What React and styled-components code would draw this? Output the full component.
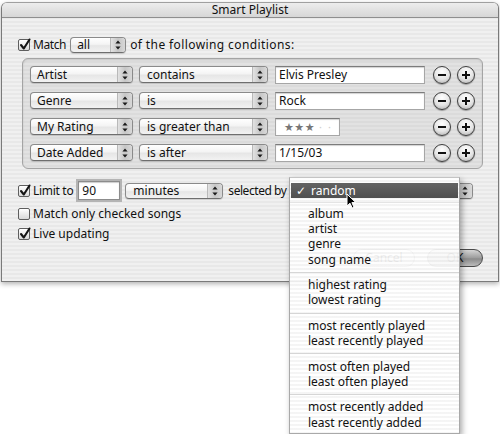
import React from "react";
import styled, { createGlobalStyle } from "styled-components";

const GlobalStyle = createGlobalStyle`
  html, body { margin: 0; padding: 0; background: #fff; }
  body {
    font-family: "Noto Sans", "DejaVu Sans", sans-serif;
    font-size: 12px;
    color: #111;
  }
  * { box-sizing: border-box; }
`;

const Page = styled.div`
  position: relative;
  width: 500px;
  height: 434px;
  overflow: hidden;
  padding: 2px 0 0 1px;
`;

const Window = styled.div`
  width: 498px;
  height: 280px;
  border: 1px solid #7a7a7a;
  border-top-color: #a0a0a0;
  border-radius: 6px 6px 0 0;
  background: repeating-linear-gradient(
    to bottom,
    #f0f0f0 0,
    #f0f0f0 2px,
    #e8e8e8 2px,
    #e8e8e8 4px
  );
  box-shadow: 0 2px 5px rgba(0, 0, 0, 0.3);
  display: flex;
  flex-direction: column;
  overflow: hidden;
`;

const TitleBar = styled.div`
  height: 15px;
  flex-shrink: 0;
  background: linear-gradient(#ededed, #d6d6d6);
  border-bottom: 1px solid #8e8e8e;
  display: flex;
  align-items: center;
  justify-content: center;
  font-size: 12px;
  line-height: 1;
  color: #111;
`;

const Body = styled.div`
  padding: 18px 0 0 16px;
  display: flex;
  flex-direction: column;
`;

const Row = styled.div`
  display: flex;
  align-items: center;
  height: ${(p) => p.$h || 16}px;
  margin-top: ${(p) => p.$mt || 0}px;
`;

const Label = styled.span`
  white-space: nowrap;
  line-height: 1;
  margin-left: ${(p) => p.$ml || 0}px;
  letter-spacing: ${(p) => p.$ls || 0}px;
`;

const BoxCheck = styled.span`
  position: relative;
  width: 12px;
  height: 12px;
  flex-shrink: 0;
  border: 1px solid #5e5e5e;
  border-radius: 2px;
  background: linear-gradient(#ffffff, #d9d9d9);
  box-shadow: inset 0 1px 1px rgba(255, 255, 255, 0.8);
  svg {
    position: absolute;
    left: 0;
    top: -2px;
  }
`;

const Check = ({ on }) => (
  <BoxCheck>
    {on && (
      <svg width="12" height="13" viewBox="0 0 12 13">
        <path d="M2 7 L4.8 10.5 L10.5 1.5" fill="none" stroke="#151515" strokeWidth="2.1" strokeLinecap="round" strokeLinejoin="round" />
      </svg>
    )}
  </BoxCheck>
);

const CheckLabel = styled.label`
  display: flex;
  align-items: center;
  gap: 3px;
`;

const PopupBox = styled.div`
  width: ${(p) => p.$w}px;
  height: ${(p) => p.$h || 17}px;
  flex-shrink: 0;
  display: flex;
  border: 1px solid #8a8a8a;
  border-bottom-color: #6e6e6e;
  border-radius: 4px;
  background: linear-gradient(#ffffff, #f4f4f4 45%, #e6e6e6 55%, #f2f2f2);
  box-shadow: 0 1px 1px rgba(0, 0, 0, 0.15);
  overflow: hidden;
  margin-left: ${(p) => p.$ml || 0}px;
`;

const PopupText = styled.span`
  flex: 1;
  display: flex;
  align-items: center;
  padding-left: ${(p) => p.$pl || 7}px;
  line-height: 1;
  white-space: nowrap;
`;

const PopupArrows = styled.span`
  width: 15px;
  flex-shrink: 0;
  display: flex;
  align-items: center;
  justify-content: center;
  background: linear-gradient(90deg, #e2e2e2, #c6c6c6 50%, #d8d8d8);
  border-left: 1px solid #b9b9b9;
`;

const Arrows = () => (
  <svg width="6" height="10" viewBox="0 0 6 10">
    <path d="M3 0.5 L5.6 3.6 H0.4 Z M0.4 6.4 H5.6 L3 9.5 Z" fill="#1a1a1a" />
  </svg>
);

const Popup = ({ w, h, ml, pl, children }) => (
  <PopupBox $w={w} $h={h} $ml={ml}>
    <PopupText $pl={pl}>{children}</PopupText>
    <PopupArrows>
      <Arrows />
    </PopupArrows>
  </PopupBox>
);

const Field = styled.div`
  width: ${(p) => p.$w}px;
  height: ${(p) => p.$h || 18}px;
  flex-shrink: 0;
  margin-left: ${(p) => p.$ml || 0}px;
  margin-right: ${(p) => p.$mr || 0}px;
  display: flex;
  align-items: center;
  padding-left: 3px;
  background: #fff;
  border: 1px solid #a6a6a6;
  border-top-color: #7c7c7c;
  box-shadow: inset 0 1px 1px rgba(0, 0, 0, 0.18);
  line-height: 1;
  white-space: nowrap;
`;

const FocusField = styled(Field)`
  box-shadow: 0 0 0 2px #b4b4b4, inset 0 1px 1px rgba(0, 0, 0, 0.2);
  border-color: #8c8c8c;
`;

const Stars = styled.span`
  margin-left: 5px;
  color: #777;
  font-size: 11px;
  letter-spacing: 0.5px;
  span {
    color: #cfcfcf;
    letter-spacing: 6px;
    margin-left: 4px;
  }
`;

const ConditionsBox = styled.div`
  margin: 5px 0 0 4px;
  width: 461px;
  padding: 7px 8px 7px 7px;
  border: 1px solid #a4a4a4;
  border-radius: 6px;
  background: repeating-linear-gradient(
    to bottom,
    #e2e2e2 0,
    #e2e2e2 2px,
    #dbdbdb 2px,
    #dbdbdb 4px
  );
  box-shadow: inset 0 1px 2px rgba(0, 0, 0, 0.12);
  display: flex;
  flex-direction: column;
  gap: 9px;
`;

const CondRow = styled.div`
  display: flex;
  align-items: center;
  height: 17px;
`;

const RoundBtn = styled.span`
  width: 18px;
  height: 18px;
  flex-shrink: 0;
  margin-left: ${(p) => p.$ml}px;
  border-radius: 50%;
  border: 1.5px solid #3e3e3e;
  background: radial-gradient(circle at 50% 30%, #ffffff, #e4e4e4 55%, #a8a8a8);
  box-shadow: 0 1px 1px rgba(0, 0, 0, 0.3);
  display: flex;
  align-items: center;
  justify-content: center;
`;

const Glyph = ({ plus }) => (
  <svg width="10" height="10" viewBox="0 0 10 10">
    <path d={plus ? "M1 5 H9 M5 1 V9" : "M1 5 H9"} stroke="#111" strokeWidth="2" />
  </svg>
);

const Footer = styled.div`
  display: flex;
  justify-content: flex-end;
  gap: 12px;
  margin-top: 7px;
  padding-right: 15px;
`;

const PushBtn = styled.div`
  width: ${(p) => p.$w}px;
  height: 18px;
  border-radius: 9px;
  border: 1px solid ${(p) => (p.$def ? "#4a4a4a" : "#7a7a7a")};
  background: ${(p) =>
    p.$def
      ? "linear-gradient(#d4d4d4, #9c9c9c 50%, #8a8a8a 55%, #bcbcbc)"
      : "linear-gradient(#ffffff, #ececec 50%, #dcdcdc 55%, #f0f0f0)"};
  display: flex;
  align-items: center;
  justify-content: center;
  line-height: 1;
`;

const Menu = styled.div`
  position: absolute;
  left: 289px;
  top: 177px;
  width: 171px;
  height: 257px;
  padding-top: 5px;
  background: repeating-linear-gradient(
    to bottom,
    rgba(255, 255, 255, 0.93) 0,
    rgba(255, 255, 255, 0.93) 2px,
    rgba(244, 244, 244, 0.93) 2px,
    rgba(244, 244, 244, 0.93) 4px
  );
  border: 1px solid #a9a9a9;
  border-top-color: #c4c4c4;
  box-shadow: 2px 3px 6px rgba(0, 0, 0, 0.35);
  font-size: 12px;
  color: #111;
  display: flex;
  flex-direction: column;
`;

const Item = styled.div`
  height: ${(p) => (p.$sel ? 15 : 15.3)}px;
  flex-shrink: 0;
  margin: 0 1px;
  padding-left: ${(p) => (p.$sel ? 5 : 17)}px;
  display: flex;
  align-items: center;
  gap: 5px;
  line-height: 1;
  white-space: nowrap;
  background: ${(p) => (p.$sel ? "linear-gradient(#636363, #4f4f4f)" : "transparent")};
  color: ${(p) => (p.$sel ? "#fff" : "#111")};
`;

const Sep = styled.div`
  height: ${(p) => p.$h}px;
  flex-shrink: 0;
  display: flex;
  align-items: center;
  &::after {
    content: "";
    flex: 1;
    height: 1px;
    background: ${(p) => p.$line || "#d6d6d6"};
  }
`;

const Cursor = styled.svg`
  position: absolute;
  left: 346px;
  top: 193px;
`;

const groups = [
  ["album", "artist", "genre", "song name"],
  ["highest rating", "lowest rating"],
  ["most recently played", "least recently played"],
  ["most often played", "least often played"],
  ["most recently added", "least recently added"],
];

const conditions = [
  { field: "Artist", op: "contains", value: "Elvis Presley" },
  { field: "Genre", op: "is", value: "Rock" },
  { field: "My Rating", op: "is greater than", rating: true },
  { field: "Date Added", op: "is after", value: "1/15/03" },
];

export default function App() {
  return (
    <>
      <GlobalStyle />
      <Page>
        <Window>
          <TitleBar>Smart Playlist</TitleBar>
          <Body>
            <Row $h={17}>
              <CheckLabel>
                <Check on />
                <Label $ls={-0.4}>Match</Label>
              </CheckLabel>
              <Popup w={56} h={16} ml={4} pl={6}>all</Popup>
              <Label $ml={4} $ls={0.4}>of the following conditions:</Label>
            </Row>

            <ConditionsBox>
              {conditions.map((c) => (
                <CondRow key={c.field}>
                  <Popup w={103} pl={6}>{c.field}</Popup>
                  <Popup w={129} ml={6}>{c.op}</Popup>
                  {c.rating ? (
                    <Field $w={65} $ml={7} $mr={85}>
                      <Stars>
                        ★★★<span>··</span>
                      </Stars>
                    </Field>
                  ) : (
                    <Field $w={150} $ml={7}>{c.value}</Field>
                  )}
                  <RoundBtn $ml={8}>
                    <Glyph />
                  </RoundBtn>
                  <RoundBtn $ml={6}>
                    <Glyph plus />
                  </RoundBtn>
                </CondRow>
              ))}
            </ConditionsBox>

            <Row $h={19} $mt={12}>
              <CheckLabel>
                <Check on />
                <Label $ls={-0.3}>Limit to</Label>
              </CheckLabel>
              <FocusField $w={42} $h={19} $ml={5}>90</FocusField>
              <Popup w={98} h={16} ml={5}>minutes</Popup>
              <Label $ml={5} $ls={-0.45}>selected by</Label>
              <Popup w={182} h={16} ml={5} />
            </Row>

            <Row $mt={6}>
              <CheckLabel>
                <Check />
                <Label>Match only checked songs</Label>
              </CheckLabel>
            </Row>

            <Row $mt={4}>
              <CheckLabel>
                <Check on />
                <Label>Live updating</Label>
              </CheckLabel>
            </Row>
          </Body>

          <Footer>
            <PushBtn $w={62}>Cancel</PushBtn>
            <PushBtn $w={56} $def>OK</PushBtn>
          </Footer>
        </Window>

        <Menu>
          <Item $sel>
            <span>✓</span>
            <span>random</span>
          </Item>
          <Sep $h={8} $line="#e4e4e4" />
          {groups.map((g, gi) => (
            <React.Fragment key={gi}>
              {gi > 0 && <Sep $h={10.2} />}
              {g.map((t) => (
                <Item key={t}>{t}</Item>
              ))}
            </React.Fragment>
          ))}
        </Menu>

        <Cursor width="11" height="17" viewBox="0 0 11 17">
          <path d="M1 1 L1 13 L4 10.2 L6.2 15 L8 14.2 L5.9 9.6 L9.8 9.6 Z" fill="#000" stroke="#fff" strokeWidth="1" strokeLinejoin="round" />
        </Cursor>
      </Page>
    </>
  );
}
